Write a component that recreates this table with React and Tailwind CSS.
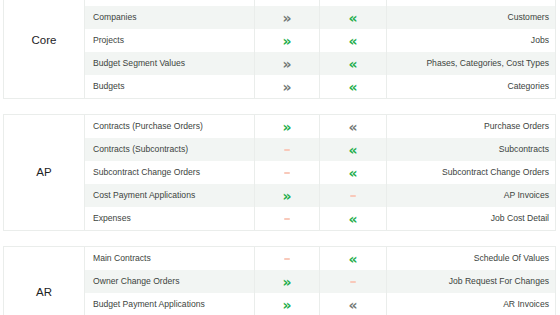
import React from "react";

const G = "g"; // green arrow
const N = "n"; // gray arrow
const D = "d"; // dash

const groups = [
  {
    label: "Core",
    rows: [
      ["Vendors", N, G, "Vendors"],
      ["Companies", N, G, "Customers"],
      ["Projects", G, G, "Jobs"],
      ["Budget Segment Values", N, G, "Phases, Categories, Cost Types"],
      ["Budgets", N, G, "Categories"],
    ],
  },
  {
    label: "AP",
    rows: [
      ["Contracts (Purchase Orders)", G, N, "Purchase Orders"],
      ["Contracts (Subcontracts)", D, G, "Subcontracts"],
      ["Subcontract Change Orders", D, G, "Subcontract Change Orders"],
      ["Cost Payment Applications", G, D, "AP Invoices"],
      ["Expenses", D, G, "Job Cost Detail"],
    ],
  },
  {
    label: "AR",
    rows: [
      ["Main Contracts", D, G, "Schedule Of Values"],
      ["Owner Change Orders", G, D, "Job Request For Changes"],
      ["Budget Payment Applications", G, N, "AR Invoices"],
      ["Payments", G, N, "Cash Receipts"],
    ],
  },
];

function Mark({ kind, dir }) {
  if (kind === D) {
    return <span className="block w-[6px] h-[2px] rounded-full bg-[#f9c9ba]" />;
  }
  const color = kind === G ? "text-[#1fae4c]" : "text-[#737975]";
  return (
    <span
      className={`${color} font-bold text-[14px] leading-none`}
      style={{ fontFamily: "'DejaVu Sans', sans-serif" }}
    >
      {dir === "r" ? "»" : "«"}
    </span>
  );
}

function Group({ group, first }) {
  return (
    <div className={`flex border border-[#eaedeb] ${first ? "-mt-[18px]" : "mt-[15px]"}`}>
      <div className="w-[81px] shrink-0 flex items-center justify-center border-r border-[#eaedeb] text-[11.5px] text-[#1d221f]">
        {group.label}
      </div>
      <div className="flex-1 flex flex-col">
        {group.rows.map((r, i) => (
          <div
            key={i}
            className={`grid grid-cols-[170px_65px_67px_1fr] h-[23px] text-[8.6px] text-[#3c4440] ${i % 2 === 1 ? "bg-[#f2f5f3]" : "bg-white"}`}
          >
            <div className="flex items-center pl-[8px] border-r border-[#eaedeb]">{r[0]}</div>
            <div className="flex items-center justify-center border-r border-[#eaedeb]">
              <Mark kind={r[1]} dir="r" />
            </div>
            <div className="flex items-center justify-center border-r border-[#eaedeb]">
              <Mark kind={r[2]} dir="l" />
            </div>
            <div className="flex items-center justify-end pr-[6px]">{r[3]}</div>
          </div>
        ))}
      </div>
    </div>
  );
}

export default function App() {
  return (
    <div
      className="w-[560px] h-[315px] overflow-hidden bg-white pl-[3px] pr-[4px]"
      style={{ fontFamily: "'Liberation Sans', Arial, sans-serif" }}
    >
      {groups.map((g, i) => (
        <Group key={g.label} group={g} first={i === 0} />
      ))}
    </div>
  );
}
